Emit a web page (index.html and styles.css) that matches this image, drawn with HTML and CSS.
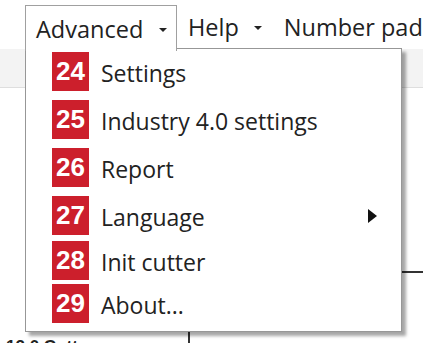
FILE: index.html
```html
<!DOCTYPE html>
<html lang="en">
<head>
    <meta charset="UTF-8">
    <title>Advanced menu</title>
    <link rel="stylesheet" href="styles.css">
</head>
<body>

    <!-- Menu bar -->
    <header class="menubar">
        <div class="menu menu-open">Advanced <span class="caret"></span></div>
        <div class="menu">Help <span class="caret"></span></div>
        <div class="menu">Number pad</div>
    </header>

    <!-- Toolbar strip -->
    <div class="toolbar"></div>

    <!-- Working area behind the menu -->
    <main class="work">
        <div class="side">
            <p class="caption">12.0 Cutter</p>
        </div>
        <div class="panel"></div>
    </main>

    <!-- Open dropdown -->
    <ul class="dropdown">
        <li class="item"><span class="badge">24</span>Settings</li>
        <li class="item"><span class="badge">25</span>Industry 4.0 settings</li>
        <li class="item"><span class="badge">26</span>Report</li>
        <li class="item short"><span class="badge">27</span>Language<span class="sub-arrow"></span></li>
        <li class="item shorter"><span class="badge">28</span>Init cutter</li>
        <li class="item"><span class="badge">29</span>About...</li>
    </ul>

</body>
</html>
```

FILE: styles.css
```css
/* General */
body {
    margin: 0;
    width: 423px;
    height: 343px;
    overflow: hidden;
    background: #fff;
    font-family: "Open Sans", "Noto Sans", sans-serif;
    color: #222;
    position: relative;
}

/* Menu bar */
.menubar {
    display: flex;
    align-items: flex-start;
    height: 44px;
    padding: 5px 0 0 25px;
    white-space: nowrap;
    font-size: 23.5px;
}

.menu {
    display: flex;
    align-items: center;
    height: 44px;
    margin-left: 11px;
}

.menu-open {
    position: relative;
    z-index: 3;
    margin-left: 0;
    width: 131px;
    height: 45px;
    padding: 0 9px 0 10px;
    border: 1px solid #a0a0a0;
    border-bottom: 0;
    background: #fff;
    justify-content: space-between;
}

.caret {
    display: inline-block;
    width: 0;
    height: 0;
    margin: 2px 0 0 15px;
    border-left: 4px solid transparent;
    border-right: 4px solid transparent;
    border-top: 4px solid #222;
}

.menu .caret {
    margin-right: 11px;
}

.menu-open .caret {
    margin-right: 0;
}

/* Toolbar */
.toolbar {
    height: 38px;
    background: #f3f3f3;
    border-bottom: 1px solid #dedede;
}

/* Work area */
.work {
    display: flex;
}

.side {
    width: 188px;
}

.caption {
    margin: 249px 0 0 6px;
    font-family: "Liberation Sans", Arial, sans-serif;
    font-weight: bold;
    font-size: 17px;
    color: #222;
}

.panel {
    flex: 1;
    margin-top: 183px;
    height: 100px;
    border-top: 2px solid #333;
    border-left: 2px solid #333;
}

/* Dropdown */
.dropdown {
    position: absolute;
    left: 25px;
    top: 48px;
    z-index: 2;
    margin: 0;
    padding: 3px 0 0 26px;
    box-sizing: border-box;
    width: 377px;
    height: 284px;
    list-style: none;
    background: #fff;
    border: 1px solid #979797;
    box-shadow: 4px 4px 3px rgba(0, 0, 0, 0.35);
    font-size: 23px;
}

.item {
    display: flex;
    align-items: flex-start;
    height: 48px;
    line-height: 42px;
}

.item.short {
    height: 45px;
}

.item.shorter {
    height: 43px;
}

.badge {
    width: 37px;
    height: 39px;
    margin-right: 12px;
    background: #cc1f2c;
    color: #fff;
    font-family: "Liberation Sans", Arial, sans-serif;
    font-weight: bold;
    font-size: 26px;
    line-height: 39px;
    text-align: center;
}

.sub-arrow {
    width: 0;
    height: 0;
    margin: 13px 24px 0 auto;
    border-top: 7px solid transparent;
    border-bottom: 7px solid transparent;
    border-left: 9px solid #111;
}
```
